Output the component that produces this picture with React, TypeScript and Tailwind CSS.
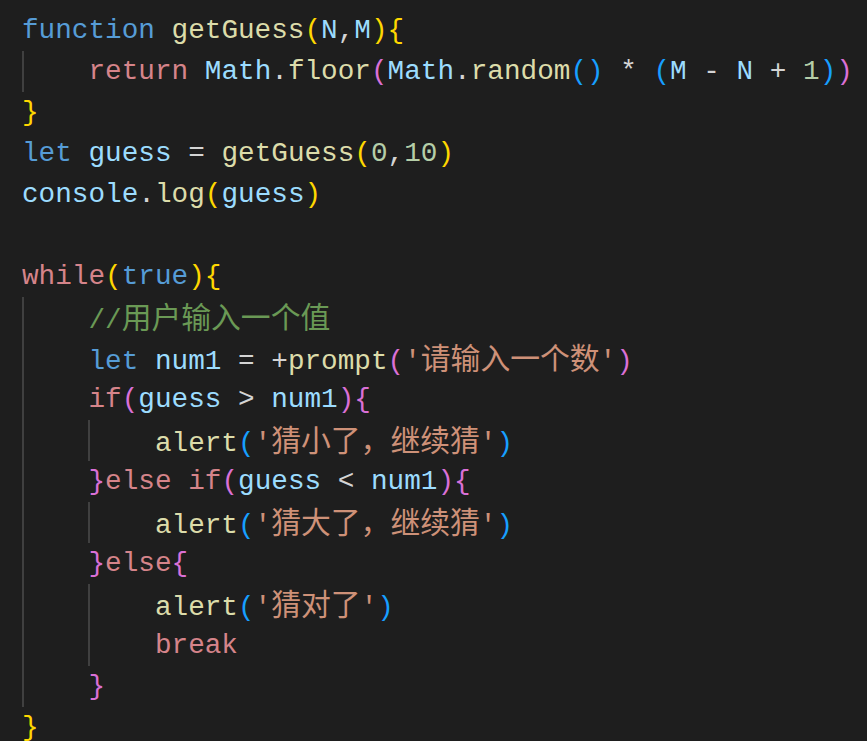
type Tok = [string, string]

const C = {
  kw: 'text-[#569cd6]',
  ctrl: 'text-[#d5848a]',
  fn: 'text-[#dcdcaa]',
  v: 'text-[#9cdcfe]',
  num: 'text-[#b5cea8]',
  str: 'text-[#ce9178]',
  cm: 'text-[#6a9955]',
  op: 'text-[#d4d4d4]',
  b1: 'text-[#ffd700]',
  b2: 'text-[#da70d6]',
  b3: 'text-[#179fff]',
}

interface Line {
  indent: number
  guides: number
  toks: Tok[]
}

const lines: Line[] = [
  {
    indent: 0,
    guides: 0,
    toks: [['function', C.kw], [' ', C.op], ['getGuess', C.fn], ['(', C.b1], ['N', C.v], [',', C.op], ['M', C.v], [')', C.b1], ['{', C.b1]],
  },
  {
    indent: 1,
    guides: 1,
    toks: [
      ['return', C.ctrl], [' ', C.op], ['Math', C.v], ['.', C.op], ['floor', C.fn], ['(', C.b2],
      ['Math', C.v], ['.', C.op], ['random', C.fn], ['()', C.b3], [' * ', C.op], ['(', C.b3],
      ['M', C.v], [' - ', C.op], ['N', C.v], [' + ', C.op], ['1', C.num], [')', C.b3], [')', C.b2],
    ],
  },
  { indent: 0, guides: 0, toks: [['}', C.b1]] },
  {
    indent: 0,
    guides: 0,
    toks: [['let', C.kw], [' ', C.op], ['guess', C.v], [' = ', C.op], ['getGuess', C.fn], ['(', C.b1], ['0', C.num], [',', C.op], ['10', C.num], [')', C.b1]],
  },
  {
    indent: 0,
    guides: 0,
    toks: [['console', C.v], ['.', C.op], ['log', C.fn], ['(', C.b1], ['guess', C.v], [')', C.b1]],
  },
  { indent: 0, guides: 0, toks: [] },
  {
    indent: 0,
    guides: 0,
    toks: [['while', C.ctrl], ['(', C.b1], ['true', C.kw], [')', C.b1], ['{', C.b1]],
  },
  { indent: 1, guides: 1, toks: [['//用户输入一个值', C.cm]] },
  {
    indent: 1,
    guides: 1,
    toks: [['let', C.kw], [' ', C.op], ['num1', C.v], [' = +', C.op], ['prompt', C.fn], ['(', C.b2], ["'请输入一个数'", C.str], [')', C.b2]],
  },
  {
    indent: 1,
    guides: 1,
    toks: [['if', C.ctrl], ['(', C.b2], ['guess', C.v], [' > ', C.op], ['num1', C.v], [')', C.b2], ['{', C.b2]],
  },
  {
    indent: 2,
    guides: 2,
    toks: [['alert', C.fn], ['(', C.b3], ["'猜小了，继续猜'", C.str], [')', C.b3]],
  },
  {
    indent: 1,
    guides: 1,
    toks: [['}', C.b2], ['else', C.ctrl], [' ', C.op], ['if', C.ctrl], ['(', C.b2], ['guess', C.v], [' < ', C.op], ['num1', C.v], [')', C.b2], ['{', C.b2]],
  },
  {
    indent: 2,
    guides: 2,
    toks: [['alert', C.fn], ['(', C.b3], ["'猜大了，继续猜'", C.str], [')', C.b3]],
  },
  { indent: 1, guides: 1, toks: [['}', C.b2], ['else', C.ctrl], ['{', C.b2]] },
  {
    indent: 2,
    guides: 2,
    toks: [['alert', C.fn], ['(', C.b3], ["'猜对了'", C.str], [')', C.b3]],
  },
  { indent: 2, guides: 2, toks: [['break', C.ctrl]] },
  { indent: 1, guides: 1, toks: [['}', C.b2]] },
  { indent: 0, guides: 0, toks: [['}', C.b1]] },
]

// split CJK runs so they get the wider fallback glyph size
function renderText(text: string) {
  const parts = text.split(/([\u3000-\u9fff\uff00-\uffef]+)/)
  return parts.map((p, i) =>
    i % 2 === 1 ? (
      <span key={i} className="text-[29.8px]" style={{ fontFamily: '"Noto Sans CJK SC", sans-serif' }}>
        {p}
      </span>
    ) : (
      p
    ),
  )
}

export default function App() {
  return (
    <div className="w-[867px] h-[741px] overflow-hidden bg-[#1e1e1e]">
      <div
        className="pt-[10px] pl-[22px] text-[27.7px] whitespace-pre"
        style={{ fontFamily: '"Liberation Mono", "Noto Sans CJK SC", monospace' }}
      >
        {lines.map((line, idx) => (
          <div key={idx} className="flex h-[41px] items-center leading-[41px]">
            {Array.from({ length: line.indent }).map((_, g) => (
              <span
                key={g}
                className={
                  g < line.guides
                    ? 'inline-block h-[41px] w-[4ch] shrink-0 border-l-2 border-[#404040]'
                    : 'inline-block h-[41px] w-[4ch] shrink-0'
                }
              />
            ))}
            <span>
              {line.toks.map(([t, cls], i) => (
                <span key={i} className={cls}>
                  {renderText(t)}
                </span>
              ))}
            </span>
          </div>
        ))}
      </div>
    </div>
  )
}
